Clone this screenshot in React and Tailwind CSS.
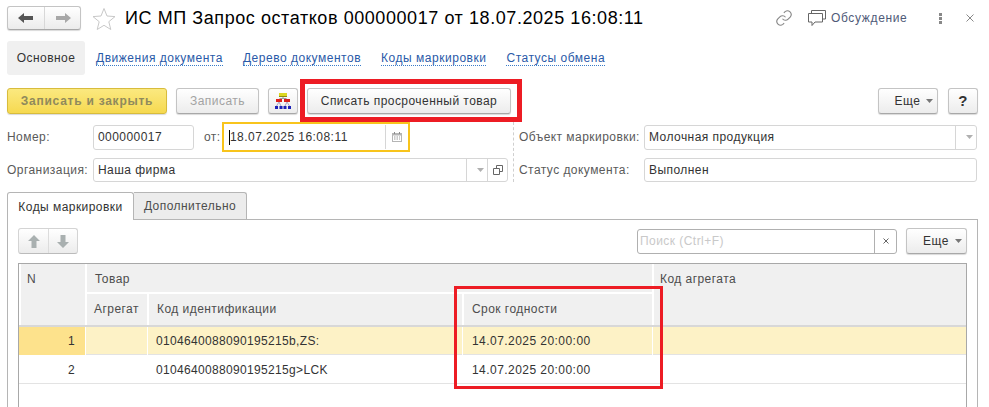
// App.jsx
const Btn = ({ className = "", children }) => (
    <div
        className={`flex items-center justify-center rounded-[3px] border border-[#c4c4c4] border-b-[#a8a8a8] bg-linear-to-b from-white to-[#ececec] shadow-[0_1px_1px_rgba(0,0,0,0.15)] ${className}`}
    >
        {children}
    </div>
);

const Caret = ({ color = "#777" }) => (
    <svg width="7" height="4" viewBox="0 0 7 4" className="ml-1.5">
        <path d="M0 0h7L3.500 4z" fill={color} />
    </svg>
);

const MoreBtn = ({ className = "" }) => (
    <Btn className={`h-[26px] pl-3 text-[#333] ${className}`}>
        Еще
        <Caret />
    </Btn>
);

const Field = ({ className = "", children }) => (
    <div className={`flex items-center rounded-[3px] border border-[#d6d6d6] bg-white ${className}`}>
        {children}
    </div>
);

const Arrow = ({ color, flip }) => (
    <svg width="16" height="12" viewBox="0 0 16 12" className={flip ? "rotate-180" : ""}>
        <path d="M0 6l6-5v3h9v4H6v3z" fill={color} />
    </svg>
);

const VArrow = ({ down }) => (
    <svg width="12" height="13" viewBox="0 0 12 13" className={down ? "rotate-180" : ""}>
        <path d="M6 0l6 6H8.500v7h-5V6H0z" fill="#a9b0b0" />
    </svg>
);

const HierarchyIcon = () => (
    <svg width="16" height="16" viewBox="0 0 16 16">
        <rect x="4" y="0" width="8" height="3" fill="#dcd820" />
        <rect x="4" y="3" width="8" height="1" fill="#8f8c10" />
        <path d="M8 4v1.500M4.500 5.500h7" stroke="#999" fill="none" />
        <rect x="1" y="6" width="6" height="3" fill="#e0201c" />
        <rect x="9" y="6" width="6" height="3" fill="#d8201c" />
        <path d="M4 9l-2.500 4M4 9l2 4M12 9l-2 4M12 9l2.500 4" stroke="#a8a8c8" fill="none" />
        <rect x="0" y="13" width="3" height="3" fill="#1c22b8" />
        <rect x="4.500" y="13" width="3" height="3" fill="#1c22b8" />
        <rect x="8.500" y="13" width="3" height="3" fill="#1c22b8" />
        <rect x="13" y="13" width="3" height="3" fill="#1c22b8" />
    </svg>
);

const CalendarIcon = () => (
    <svg width="10" height="10" viewBox="0 0 10 10">
        <path d="M0 1h10v9H0z" fill="#b5b5b5" />
        <path d="M1 3.500h8V9H1z" fill="#fff" />
        <path d="M2.500 0v2M7.500 0v2" stroke="#8a8a8a" />
        <path d="M2 5h1.500M4.500 5H6M7 5h1M2 7h1.500M4.500 7H6M7 7h1" stroke="#9a9a9a" />
    </svg>
);

const Links = ["Движения документа", "Дерево документов", "Коды маркировки", "Статусы обмена"];

const Hcell = ({ className = "", children }) => (
    <div className={`border-l-2 border-white bg-[#f0f0f0] text-[#4d4d4d] ${className}`}>{children}</div>
);

const Row = ({ n, code, active, className = "" }) => {
    const sep = active ? "border-l border-white" : "border-l border-transparent";
    return (
        <div className={`grid grid-cols-[66px_62px_315px_190px_1fr] items-stretch border-b border-[#e3e3e3] text-[#333] ${active ? "bg-[#fdf2c6]" : "bg-white"} ${className}`}>
            <div className={`pr-2.5 text-right ${active ? "bg-[#fde28c]" : ""}`}>{n}</div>
            <div className={sep}></div>
            <div className={`pl-2 tracking-[0.33px] ${sep}`}>{code}</div>
            <div className={`pl-[9px] ${sep}`}>14.07.2025 20:00:00</div>
            <div className={sep}></div>
        </div>
    );
};

const App = () => {
    return (
        <div className="relative h-[407px] w-[989px] overflow-hidden bg-white pl-[7px] text-[12px] font-['Liberation_Sans',Arial,sans-serif] tracking-[0.45px] text-[#333]">
            {/* Title bar */}
            <div className="flex h-[41px] items-center pb-[5px]">
                <div className="flex h-[24px] w-[74px] items-center rounded-[3px] border border-[#c4c4c4] border-b-[#a8a8a8] bg-linear-to-b from-white to-[#ececec] shadow-[0_1px_1px_rgba(0,0,0,0.15)]">
                    <div className="flex h-full w-[37px] items-center justify-center border-r border-[#d8d8d8]">
                        <Arrow color="#555" />
                    </div>
                    <div className="flex flex-1 items-center justify-center">
                        <Arrow color="#a8a8a8" flip />
                    </div>
                </div>
                <svg width="24" height="23" viewBox="0 0 24 23" className="ml-[11px]">
                    <path d="M12 1.500l3 7.500 8 .6-6.200 5.100 2 7.800L12 18.300l-6.800 4.200 2-7.800L1 9.600l8-.6z" fill="none" stroke="#c8c8c8" />
                </svg>
                <div className="ml-[9px] w-[520px] whitespace-nowrap text-[18px] leading-none tracking-[0.57px] text-black">
                    ИС МП Запрос остатков 000000017 от 18.07.2025 16:08:11
                </div>
                <svg width="18" height="18" viewBox="0 0 24 24" fill="none" stroke="#888" strokeWidth="1.500" className="ml-[130px]">
                    <path d="M10 13a5 5 0 0 0 7.500.5l3-3a5 5 0 0 0-7-7l-1.700 1.700" />
                    <path d="M14 11a5 5 0 0 0-7.500-.5l-3 3a5 5 0 0 0 7 7l1.700-1.700" />
                </svg>
                <svg width="18" height="17" viewBox="0 0 18 17" fill="none" stroke="#666" className="ml-[15px]">
                    <path d="M3.500 3V.5h14V9H15" />
                    <path d="M.5 3.500h14V12H7l-3 3.500V12H.5z" fill="#fff" />
                </svg>
                <span className="ml-[5px] tracking-[0.65px] text-[#4f5a78]">Обсуждение</span>
                <div className="ml-[32px] flex flex-col gap-[1px]">
                    <div className="h-[3px] w-[3px] bg-[#888]"></div>
                    <div className="h-[3px] w-[3px] bg-[#888]"></div>
                    <div className="h-[3px] w-[3px] bg-[#888]"></div>
                </div>
                <svg width="8" height="8" viewBox="0 0 8 8" stroke="#888" className="ml-[24px]">
                    <path d="M.5.500l7 7M7.500.500l-7 7" />
                </svg>
            </div>

            {/* Section links */}
            <div className="flex items-center">
                <div className="flex h-[34px] w-[78px] items-center justify-center rounded-[3px] bg-[#f0f0f0] text-[#333]">
                    Основное
                </div>
                <div className="ml-[11px] flex gap-[20px]">
                    {Links.map((l) => (
                        <span key={l} className="border-b border-dotted border-[#3a7bc8] leading-[14px] tracking-[0.52px] text-[#2a5aa8]">
                            {l}
                        </span>
                    ))}
                </div>
            </div>

            {/* Command bar */}
            <div className="mt-[13px] flex h-[26px] items-center">
                <div className="flex h-[26px] w-[160px] items-center justify-center rounded-[3px] border border-[#d8bc3c] bg-linear-to-b from-[#fbe97f] to-[#f6d94f] font-bold tracking-[0.75px] text-[#8f8a5c] shadow-[0_1px_1px_rgba(0,0,0,0.15)]">
                    Записать и закрыть
                </div>
                <Btn className="ml-[9px] h-[26px] w-[83px] text-[#a3a3a3]">Записать</Btn>
                <Btn className="ml-[9px] h-[26px] w-[30px]">
                    <HierarchyIcon />
                </Btn>
                <Btn className="ml-[9px] h-[26px] w-[204px] text-[#333]">Списать просроченный товар</Btn>
                <MoreBtn className="ml-[367px] w-[60px]" />
                <Btn className="ml-[10px] h-[26px] w-[30px] text-[15px] font-bold text-[#333]">?</Btn>
            </div>

            {/* Header fields */}
            <div className="mt-[8px] flex">
                <div className="w-[506px]">
                    <div className="flex h-[30px] items-center">
                        <span className="w-[86px] text-[#5a5a5a]">Номер:</span>
                        <Field className="h-[25px] w-[101px] pl-[4px] text-[#333]">000000017</Field>
                        <span className="w-[28px] pl-[10px] text-[#5a5a5a]">от:</span>
                        <div className="flex h-[30px] w-[188px] items-center border-2 border-[#f8c41c] bg-white">
                            <div className="flex h-full flex-1 items-center pl-[5px]">
                                <div className="h-[15px] w-px bg-black"></div>
                                18.07.2025 16:08:11
                            </div>
                            <div className="flex h-[24px] w-[23px] items-center justify-center border-l border-[#d6d6d6]">
                                <CalendarIcon />
                            </div>
                        </div>
                    </div>
                    <div className="mt-[6px] flex h-[24px] items-center">
                        <span className="w-[86px] text-[#5a5a5a]">Организация:</span>
                        <Field className="h-[24px] w-[415px] shrink-0 pl-[4px] text-[#333]">
                            <span className="flex-1">Наша фирма</span>
                            <div className="flex h-full w-[21px] items-center justify-center border-l border-[#d6d6d6]">
                                <Caret color="#b0b0b0" />
                            </div>
                            <div className="flex h-full w-[20px] items-center justify-center border-l border-[#d6d6d6]">
                                <svg width="10" height="10" viewBox="0 0 10 10" fill="none" stroke="#666">
                                    <path d="M3.500 3V.5h6V6.500H7" />
                                    <path d="M.5 3.500h6v6h-6z" />
                                </svg>
                            </div>
                        </Field>
                    </div>
                </div>
                <div className="border-l border-dashed border-[#cfcfcf] pl-[5px]">
                    <div className="flex h-[30px] items-center">
                        <span className="w-[125px] text-[#5a5a5a]">Объект маркировки:</span>
                        <Field className="h-[25px] w-[333px] pl-[4px] text-[#333]">
                            <span className="flex-1">Молочная продукция</span>
                            <div className="flex h-full w-[21px] items-center justify-center border-l border-[#d6d6d6]">
                                <Caret color="#b0b0b0" />
                            </div>
                        </Field>
                    </div>
                    <div className="mt-[6px] flex h-[24px] items-center">
                        <span className="w-[125px] text-[#5a5a5a]">Статус документа:</span>
                        <Field className="h-[24px] w-[333px] pl-[4px] text-[#333]">Выполнен</Field>
                    </div>
                </div>
            </div>

            {/* Tabs */}
            <div className="relative z-10 mt-[10px] flex h-[28px] items-stretch">
                <div className="flex w-[127px] items-center justify-center rounded-t-[3px] border border-b-0 border-[#b5b5b5] bg-white text-[#333]">
                    Коды маркировки
                </div>
                <div className="mb-px flex w-[113px] items-center justify-center rounded-tr-[3px] border border-b-0 border-l-0 border-[#b5b5b5] bg-[#ececec] text-[#4d4d4d]">
                    Дополнительно
                </div>
            </div>
            <div className="-mt-px h-[200px] w-[971px] border border-[#b5b5b5] px-[10px] pt-[8px]">
                <div className="flex h-[26px] items-center">
                    <div className="flex h-[26px] w-[60px] items-center rounded-[3px] border border-[#d4d4d4] border-b-[#bbb] bg-linear-to-b from-white to-[#ececec]">
                        <div className="flex h-full w-[30px] items-center justify-center border-r border-[#dcdcdc]">
                            <VArrow />
                        </div>
                        <div className="flex flex-1 items-center justify-center">
                            <VArrow down />
                        </div>
                    </div>
                    <div className="ml-[559px] flex h-[25px] w-[260px] items-center rounded-[3px] border border-[#b0b0b0] bg-white pl-[2px] text-[#c9c9c9]">
                        <span className="flex-1">Поиск (Ctrl+F)</span>
                        <div className="flex h-full w-[22px] items-center justify-center border-l border-[#b0b0b0]">
                            <svg width="6" height="6" viewBox="0 0 6 6" stroke="#666">
                                <path d="M.5.500l5 5M5.500.500l-5 5" />
                            </svg>
                        </div>
                    </div>
                    <MoreBtn className="ml-[9px] w-[61px]" />
                </div>

                {/* Table */}
                <div className="mt-[9px] h-[200px] w-[949px] border border-[#a8a8a8]">
                    <div className="grid h-[63px] grid-cols-[66px_62px_315px_190px_1fr] grid-rows-[30px_31px] border-b-2 border-[#d8d8d8] leading-[31px]">
                        <Hcell className="row-span-2 border-l-0 pl-[6px]">N</Hcell>
                        <Hcell className="col-span-3 border-b-2 pl-2">Товар</Hcell>
                        <Hcell className="row-span-2 pl-[6px]">Код агрегата</Hcell>
                        <Hcell className="pl-[7px]">Агрегат</Hcell>
                        <Hcell className="pl-2">Код идентификации</Hcell>
                        <Hcell className="pl-2">Срок годности</Hcell>
                    </div>
                    <Row n="1" code="0104640088090195215b,ZS:" active className="h-[28px] leading-[28px]" />
                    <Row n="2" code="0104640088090195215g>LCK" className="h-[29px] leading-[30px]" />
                </div>
            </div>

            {/* Red callouts */}
            <div className="absolute left-[300px] top-[79px] h-[43px] w-[222px] border-[5px] border-[#ed1c24]"></div>
            <div className="absolute left-[454px] top-[286px] h-[103px] w-[209px] border-[3px] border-[#ed1c24]"></div>
        </div>
    );
};

export default App;
